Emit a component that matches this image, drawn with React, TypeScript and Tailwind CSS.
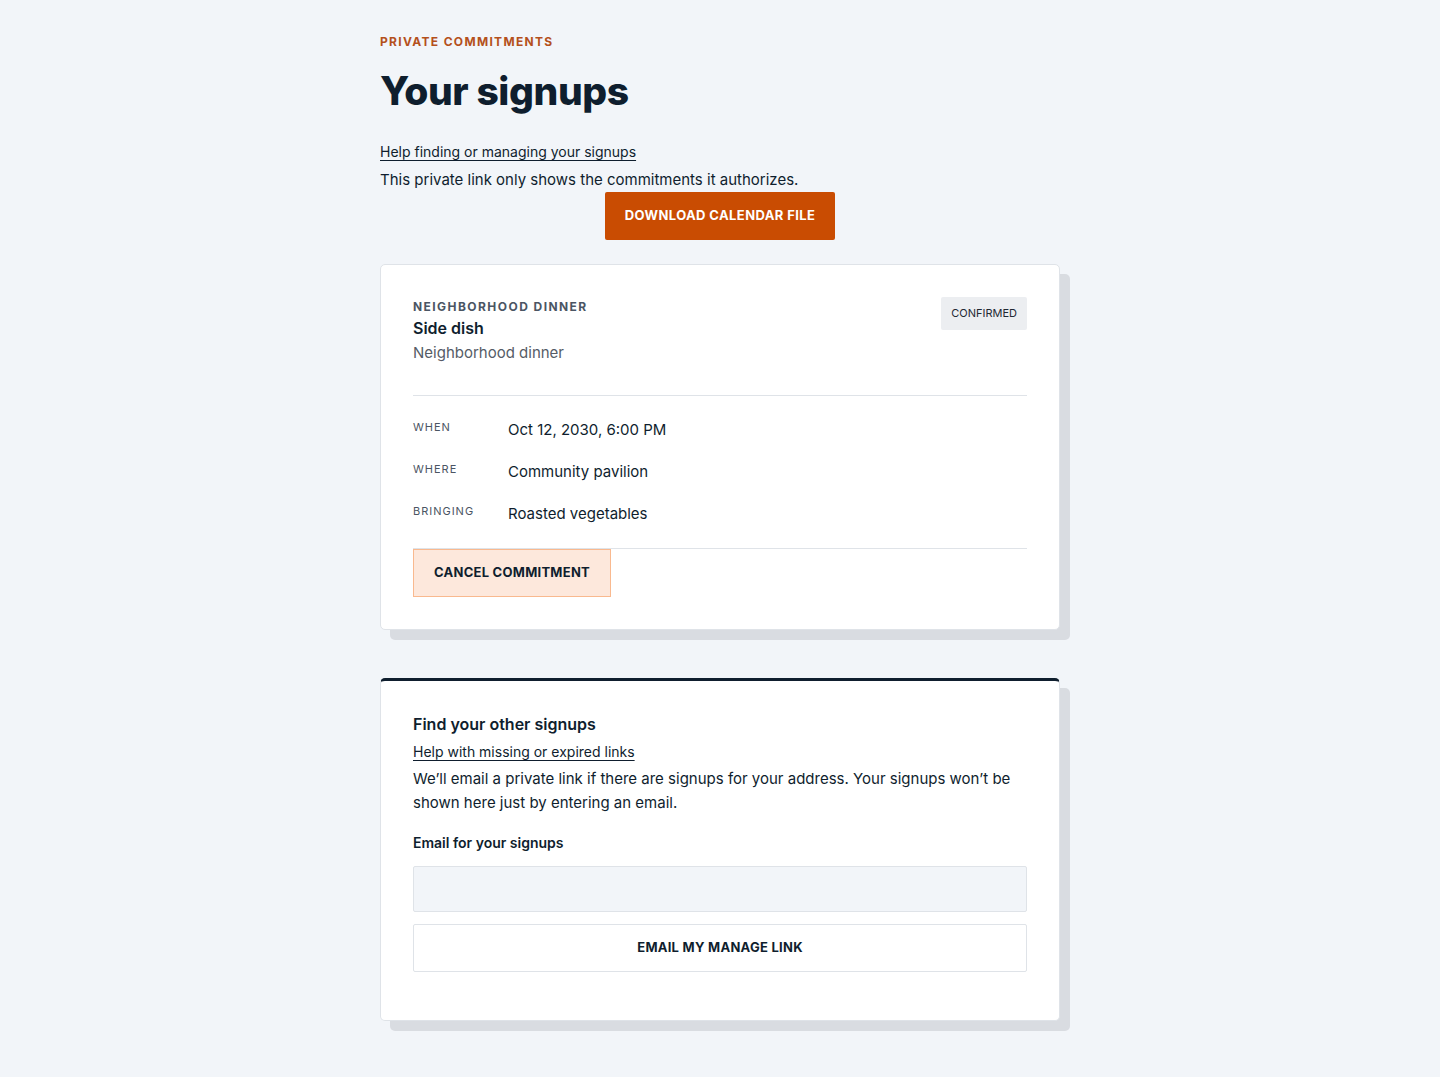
const heading = "font-['Inter','Liberation_Sans',sans-serif]";

const details = [
  { label: 'When', value: 'Oct 12, 2030, 6:00 PM' },
  { label: 'Where', value: 'Community pavilion' },
  { label: 'Bringing', value: 'Roasted vegetables' },
];

export default function App() {
  return (
    <div className="min-h-[1077px] bg-[#f2f5f9] font-['Inter','Liberation_Sans',sans-serif] text-[#0f1e2e]">
      <main className="mx-auto w-[680px] pt-[34px] pb-[47px]">
        <p className={`${heading} text-[12px] font-bold uppercase leading-[16px] tracking-[0.11em] text-[#b4501c]`}>
          Private commitments
        </p>
        <h1 className={`${heading} mt-[17px] text-[39px] font-extrabold leading-[48px] tracking-[-0.01em] text-[#0f1e2e]`}>
          Your signups
        </h1>

        <div className="mt-[27px] text-[14px] leading-[20px]">
          <a href="#" className="underline decoration-1 underline-offset-[3px]">
            Help finding or managing your signups
          </a>
        </div>
        <p className="mt-[8px] text-[15px] leading-[20px]">
          This private link only shows the commitments it authorizes.
        </p>
        <div className="flex justify-center">
          <button
            type="button"
            className={`${heading} mt-[2px] h-[48px] w-[230px] rounded-[2px] bg-[#c94c02] text-[13px] font-bold uppercase tracking-[0.03em] text-white`}
          >
            Download calendar file
          </button>
        </div>

        <section className="mt-[24px] rounded-[5px] border border-[#dfe3e8] bg-white px-[32px] pt-[32px] pb-[32px] shadow-[10px_10px_0_#d9dce1]">
          <div className="flex items-start justify-between pb-[31px]">
            <div>
              <p className={`${heading} mt-[2px] text-[12px] font-bold uppercase leading-[16px] tracking-[0.12em] text-[#4b5563]`}>
                Neighborhood dinner
              </p>
              <h2 className={`${heading} mt-[2px] text-[16px] font-semibold leading-[22px]`}>Side dish</h2>
              <p className="mt-[3px] text-[15px] leading-[22px] text-[#555c66]">Neighborhood dinner</p>
            </div>
            <span className="rounded-[2px] bg-[#eceef1] px-[10px] py-[8px] text-[11px] uppercase leading-[17px] text-[#1f2933]">
              Confirmed
            </span>
          </div>

          <dl className="flex flex-col gap-[20px] border-t border-b border-[#dfe3e8] pt-[23px] pb-[23px]">
            {details.map((d) => (
              <div key={d.label} className="flex items-start">
                <dt className="w-[95px] text-[11px] uppercase leading-[16px] tracking-[0.09em] text-[#4b5563]">
                  {d.label}
                </dt>
                <dd className="text-[15px] leading-[22px] text-[#0f1e2e]">{d.value}</dd>
              </div>
            ))}
          </dl>

          <button
            type="button"
            className={`${heading} h-[48px] w-[198px] border border-[#f9b98f] bg-[#fde8dc] text-[13px] font-bold uppercase tracking-[0.02em] text-[#0f1e2e]`}
          >
            Cancel commitment
          </button>
        </section>

        <section className="mt-[48px] rounded-[5px] border border-t-[3px] border-[#dfe3e8] border-t-[#0f1e2e] bg-white px-[32px] pt-[31px] pb-[48px] shadow-[10px_10px_0_#d9dce1]">
          <h2 className={`${heading} text-[16px] font-semibold leading-[24px]`}>Find your other signups</h2>
          <div className="mt-[6px] text-[14px] leading-[20px]">
            <a href="#" className="underline decoration-1 underline-offset-[3px]">
              Help with missing or expired links
            </a>
          </div>
          <p className="mt-[5px] text-[15px] leading-[24px]">
            We’ll email a private link if there are signups for your address. Your signups won’t be shown here just by
            entering an email.
          </p>

          <form className="mt-[17px]" onSubmit={(e) => e.preventDefault()}>
            <label className={`${heading} block text-[14px] font-semibold leading-[22px]`} htmlFor="email">
              Email for your signups
            </label>
            <input
              id="email"
              type="email"
              className="mt-[12px] block h-[46px] w-full rounded-[2px] border border-[#dfe3e8] bg-[#f2f5f9] px-3 text-[15px] outline-none"
            />
            <button
              type="submit"
              className={`${heading} mt-[12px] h-[48px] w-full rounded-[2px] border border-[#dfe3e8] bg-white text-[13px] font-bold uppercase tracking-[0.02em] text-[#0f1e2e]`}
            >
              Email my manage link
            </button>
          </form>
        </section>
      </main>
    </div>
  );
}
